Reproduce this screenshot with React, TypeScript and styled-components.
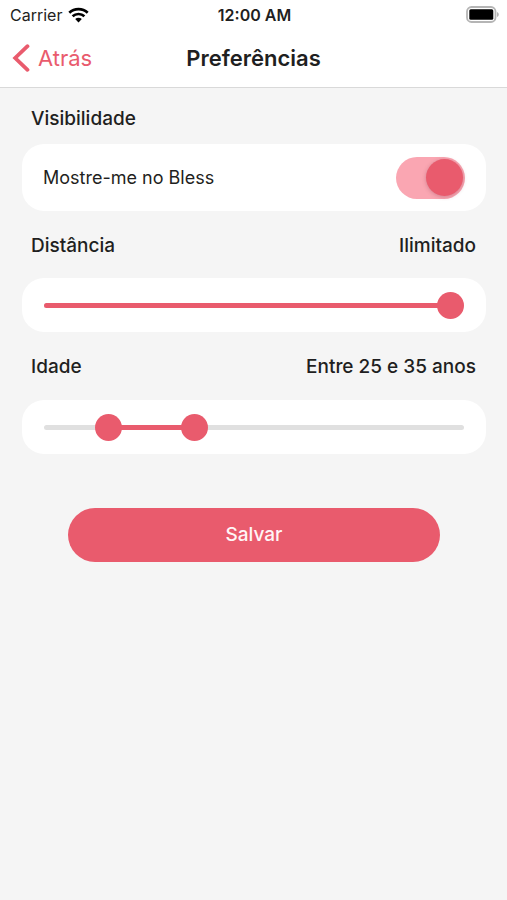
import React, { useState } from "react";
import styled, { createGlobalStyle } from "styled-components";

const color = {
  accent: "#e95b6d",
  accentSoft: "#faa6b2",
  page: "#f5f5f5",
  surface: "#ffffff",
  line: "#d9d9d9",
  track: "#e0e0e0",
  text: "#1f1f21",
};

const THUMB = 27;

const GlobalStyle = createGlobalStyle`
  *, *::before, *::after { box-sizing: border-box; }
  body {
    margin: 0;
    background: ${color.page};
    color: ${color.text};
    font-family: Inter, "Liberation Sans", sans-serif;
  }
  button, input { font: inherit; margin: 0; }
`;

const Header = styled.header`
  background: ${color.surface};
  border-bottom: 1px solid ${color.line};
`;

const StatusBar = styled.div`
  display: grid;
  grid-template-columns: 1fr auto 1fr;
  align-items: center;
  height: 29px;
  padding: 0 8px 0 10px;
  font-size: 16px;
  line-height: 20px;
`;

const Carrier = styled.div`
  display: flex;
  align-items: center;
  gap: 6px;
`;

const Clock = styled.time`
  font-size: 16px;
  font-weight: 600;
`;

const BatteryIcon = styled.svg`
  justify-self: end;
`;

const NavBar = styled.nav`
  display: grid;
  grid-template-columns: 1fr auto 1fr;
  align-items: center;
  height: 58px;
  padding: 0 12px;
`;

const BackButton = styled.button`
  display: flex;
  align-items: center;
  justify-self: start;
  gap: 8px;
  padding: 0;
  border: 0;
  background: none;
  color: ${color.accent};
  font-size: 22px;
  line-height: 30px;
  cursor: pointer;
`;

const Title = styled.h1`
  margin: 0;
  font-size: 22px;
  font-weight: 600;
  line-height: 30px;
`;

const Form = styled.form`
  padding: 19px 21px 40px 22px;
`;

const Section = styled.section`
  & + & {
    margin-top: 23px;
  }
`;

const SectionHeader = styled.div<{ $gap: number }>`
  display: flex;
  justify-content: space-between;
  padding: 0 10px 0 9px;
  margin-bottom: ${(p) => p.$gap}px;
  font-size: 19px;
  line-height: 24px;
`;

const SectionTitle = styled.h2`
  margin: 0;
  font-size: inherit;
  font-weight: 500;
`;

const SectionValue = styled.output`
  font-weight: 500;
`;

const Card = styled.div<{ $height: number }>`
  display: flex;
  align-items: center;
  justify-content: space-between;
  min-height: ${(p) => p.$height}px;
  padding: 0 21px;
  border-radius: 22px;
  background: ${color.surface};
`;

const RowLabel = styled.label`
  font-size: 18px;
  line-height: 24px;
`;

const Switch = styled.input`
  appearance: none;
  display: flex;
  align-items: center;
  width: 69px;
  height: 42px;
  padding: 0 2px;
  border-radius: 21px;
  background: ${color.track};
  cursor: pointer;

  &::before {
    content: "";
    width: 37px;
    height: 37px;
    border-radius: 50%;
    background: ${color.surface};
    box-shadow: 0 1px 4px rgba(120, 40, 60, 0.3);
  }

  &:checked {
    justify-content: flex-end;
    background: ${color.accentSoft};
  }

  &:checked::before {
    background: ${color.accent};
  }
`;

const SliderGroup = styled.div`
  display: grid;
  flex: 1;
  align-items: center;
  margin: 0 1px;

  & > * {
    grid-area: 1 / 1;
  }
`;

const Track = styled.div`
  height: 5px;
  border-radius: 3px;
  background: ${color.track};
  overflow: hidden;
`;

const Fill = styled.div`
  height: 100%;
  background: ${color.accent};
`;

const Range = styled.input`
  appearance: none;
  width: 100%;
  height: ${THUMB}px;
  background: transparent;
  pointer-events: none;

  &::-webkit-slider-thumb {
    appearance: none;
    width: ${THUMB}px;
    height: ${THUMB}px;
    border-radius: 50%;
    background: ${color.accent};
    pointer-events: auto;
    cursor: pointer;
  }

  &::-moz-range-thumb {
    width: ${THUMB}px;
    height: ${THUMB}px;
    border: 0;
    border-radius: 50%;
    background: ${color.accent};
    pointer-events: auto;
    cursor: pointer;
  }
`;

const SaveButton = styled.button`
  display: block;
  width: 80%;
  height: 54px;
  margin: 54px auto 0;
  border: 0;
  border-radius: 27px;
  background: ${color.accent};
  color: #fff5f6;
  font-size: 19px;
  font-weight: 500;
  line-height: 24px;
  cursor: pointer;
`;

const MAX_DISTANCE = 100;
const MIN_AGE = 19;
const MAX_AGE = 65;

const thumbCentre = (ratio: number) =>
  `calc(${THUMB / 2}px + (100% - ${THUMB}px) * ${ratio})`;

const ageRatio = (age: number) => (age - MIN_AGE) / (MAX_AGE - MIN_AGE);

function WifiIcon() {
  return (
    <svg width="21" height="16" viewBox="0 0 21 16" aria-hidden="true">
      <g fill="none" stroke="#000" strokeWidth="2.7">
        <path d="M1.3 5.8C6.4.9 14.6.9 19.7 5.8" />
        <path d="M4.6 9.3c3.3-3.1 8.500-3.1 11.800 0" />
      </g>
      <path d="M7.2 12.1c1.9-1.7 4.7-1.7 6.6 0l-3.3 3.3z" />
    </svg>
  );
}

function Battery() {
  return (
    <BatteryIcon width="33" height="17" viewBox="0 0 33 17" role="img" aria-label="Bateria">
      <rect x="1" y="1" width="28.5" height="15" rx="4.5" fill="none" stroke="#b5b5b5" strokeWidth="1.8" />
      <rect x="3.3" y="3.3" width="24" height="10.4" rx="1.5" />
      <path d="M31 6v5c1.1-.4 1.8-1.4 1.8-2.5S32.1 6.4 31 6z" fill="#b5b5b5" />
    </BatteryIcon>
  );
}

function ChevronIcon() {
  return (
    <svg width="18" height="28" viewBox="0 0 18 28" aria-hidden="true">
      <path
        d="M15.5 2.2 3.2 14l12.3 11.8"
        fill="none"
        stroke={color.accent}
        strokeWidth="3.8"
        strokeLinecap="round"
        strokeLinejoin="miter"
      />
    </svg>
  );
}

export default function App() {
  const [visible, setVisible] = useState(true);
  const [distance, setDistance] = useState(MAX_DISTANCE);
  const [ages, setAges] = useState({ from: 25, to: 35 });

  return (
    <>
      <GlobalStyle />
      <Header>
        <StatusBar>
          <Carrier>
            Carrier
            <WifiIcon />
          </Carrier>
          <Clock>12:00 AM</Clock>
          <Battery />
        </StatusBar>
        <NavBar>
          <BackButton type="button">
            <ChevronIcon />
            Atrás
          </BackButton>
          <Title>Preferências</Title>
        </NavBar>
      </Header>
      <Form onSubmit={(e) => e.preventDefault()}>
        <Section>
          <SectionHeader $gap={13}>
            <SectionTitle>Visibilidade</SectionTitle>
          </SectionHeader>
          <Card $height={67}>
            <RowLabel htmlFor="visible">Mostre-me no Bless</RowLabel>
            <Switch
              id="visible"
              type="checkbox"
              role="switch"
              checked={visible}
              onChange={(e) => setVisible(e.target.checked)}
            />
          </Card>
        </Section>
        <Section>
          <SectionHeader $gap={20}>
            <SectionTitle id="distance-title">Distância</SectionTitle>
            <SectionValue>
              {distance === MAX_DISTANCE ? "Ilimitado" : `${distance} km`}
            </SectionValue>
          </SectionHeader>
          <Card $height={54}>
            <SliderGroup>
              <Track>
                <Fill style={{ width: thumbCentre(distance / MAX_DISTANCE) }} />
              </Track>
              <Range
                type="range"
                aria-labelledby="distance-title"
                min={0}
                max={MAX_DISTANCE}
                value={distance}
                onChange={(e) => setDistance(Number(e.target.value))}
              />
            </SliderGroup>
          </Card>
        </Section>
        <Section>
          <SectionHeader $gap={21}>
            <SectionTitle>Idade</SectionTitle>
            <SectionValue>
              {`Entre ${ages.from} e ${ages.to} anos`}
            </SectionValue>
          </SectionHeader>
          <Card $height={54}>
            <SliderGroup>
              <Track>
                <Fill
                  style={{
                    marginLeft: thumbCentre(ageRatio(ages.from)),
                    width: `calc((100% - ${THUMB}px) * ${ageRatio(ages.to) - ageRatio(ages.from)})`,
                  }}
                />
              </Track>
              <Range
                type="range"
                aria-label="Idade mínima"
                min={MIN_AGE}
                max={MAX_AGE}
                value={ages.from}
                onChange={(e) =>
                  setAges({ ...ages, from: Math.min(Number(e.target.value), ages.to) })
                }
              />
              <Range
                type="range"
                aria-label="Idade máxima"
                min={MIN_AGE}
                max={MAX_AGE}
                value={ages.to}
                onChange={(e) =>
                  setAges({ ...ages, to: Math.max(Number(e.target.value), ages.from) })
                }
              />
            </SliderGroup>
          </Card>
        </Section>
        <SaveButton type="submit">Salvar</SaveButton>
      </Form>
    </>
  );
}
